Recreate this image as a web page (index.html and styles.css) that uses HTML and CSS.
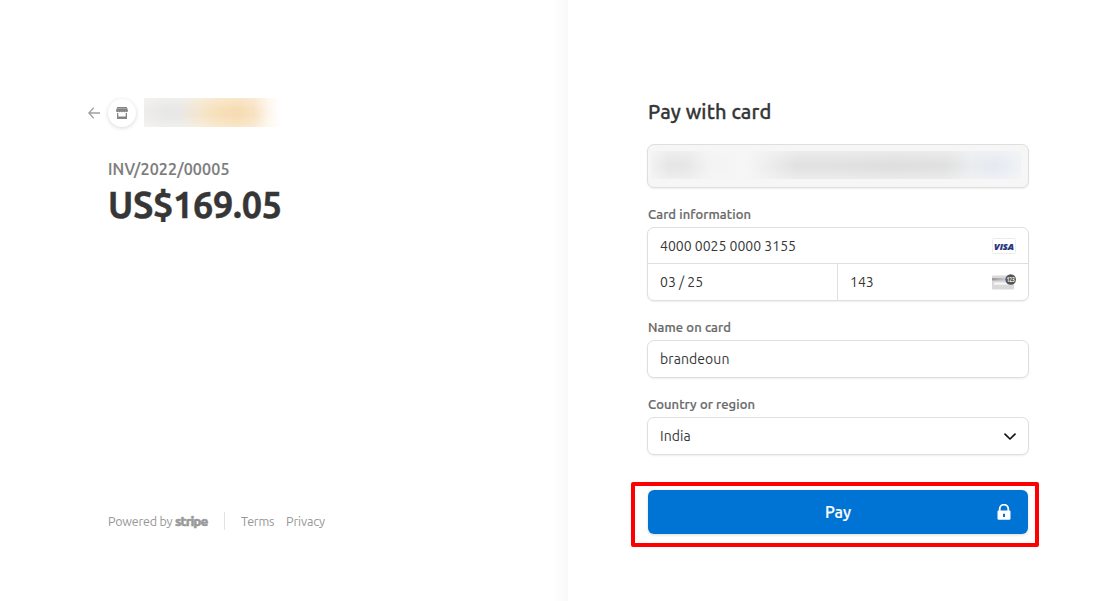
FILE: index.html
```html
<!DOCTYPE html>
<html lang="en">
<head>
<meta charset="utf-8">
<title>Pay with card</title>
<link rel="stylesheet" href="styles.css">
</head>
<body>
<div class="checkout">
  <section class="summary">
    <header class="merchant">
      <svg class="back" width="12" height="12" viewBox="0 0 12 12"><path d="M5.700 .8.9 6l4.800 5.200M1 6h11" fill="none" stroke="#a0a0a0" stroke-width="1.3"/></svg>
      <span class="avatar"><svg width="12" height="12" viewBox="0 0 12 12"><path d="M1 0h10v1H1zM.6 1.300h10.800L12 4a1.300 1.300 0 0 1-2.400.5 1.300 1.300 0 0 1-2.400 0 1.300 1.300 0 0 1-2.400 0 1.300 1.300 0 0 1-2.400 0A1.300 1.300 0 0 1 0 4zM1 6h1.300v3.500h7.400V6H11v6H1z" fill="#858585"/></svg></span>
      <span class="merchant-name"></span>
    </header>
    <div class="invoice">INV/2022/00005</div>
    <div class="amount">US$169.05</div>
    <footer class="footer">
      <span class="powered">Powered by</span><span class="stripe">stripe</span>
      <span class="divider"></span>
      <span class="terms">Terms</span><span class="privacy">Privacy</span>
    </footer>
  </section>
  <main class="payment">
    <h1 class="title">Pay with card</h1>
    <div class="email"><span class="email-mask"></span></div>
    <div class="label label-card">Card information</div>
    <div class="card-box">
      <div class="row number"><span>4000 0025 0000 3155</span>
        <svg width="24" height="16" viewBox="0 0 24 16"><rect x=".5" y=".5" width="23" height="15" rx="1" fill="#fff" stroke="#ececec"/><text class="visa" x="2" y="11.600" textLength="20" lengthAdjust="spacingAndGlyphs">VISA</text></svg>
      </div>
      <div class="split">
        <div class="row expiry"><span>03 / 25</span></div>
        <div class="row cvc"><span>143</span>
          <svg class="cvc-icon" width="24" height="16" viewBox="0 0 24 16"><defs><linearGradient id="stripe" x2="1" y2="0"><stop stop-color="#999"/><stop offset="1" stop-color="#ccc"/></linearGradient></defs><rect y="1.500" width="22" height="14" rx="1" fill="#d9d9d9"/><path d="M0 4h15v2.500H0z" fill="url(#stripe)"/><path d="M2 8.500h17v2.200H2z" fill="#f8f8f8"/><circle cx="18.700" cy="5.500" r="5.300" fill="#555"/><text class="cvc-digits" x="14.700" y="8" textLength="8" lengthAdjust="spacingAndGlyphs">123</text></svg>
        </div>
      </div>
    </div>
    <div class="label label-name">Name on card</div>
    <div class="field"><span>brandeoun</span></div>
    <div class="label label-country">Country or region</div>
    <div class="field"><span>India</span>
      <svg width="12" height="12" viewBox="0 0 12 12"><path d="m1 4.200 5 4.800 5-4.800" fill="none" stroke="#111" stroke-width="1.700" stroke-linecap="round" stroke-linejoin="round"/></svg>
    </div>
    <div class="highlight">
      <button class="pay"><span>Pay</span>
        <svg width="14" height="16" viewBox="0 0 14 16"><path d="M2.700 7V5a4.300 4.300 0 0 1 8.600 0v2" fill="none" stroke="#fff" stroke-width="1.800"/><path fill-rule="evenodd" d="M1.500 6.500h11q1 0 1 1v7q0 1.200-1.200 1.200H1.700Q.5 15.700.5 14.500v-7q0-1 1-1zM6 9.700h2V13H6z" fill="#fff"/></svg>
      </button>
    </div>
  </main>
</div>
</body>
</html>
```

FILE: styles.css
```css
* { box-sizing: border-box; }
body { margin: 0; background: #fff; font-family: Ubuntu, "Noto Sans", sans-serif; color: #363636; }
svg { display: block; flex: none; }
.checkout { display: flex; width: 1107px; height: 601px; overflow: hidden; }
.summary { width: 568px; padding: 98px 0 70px 88px; display: flex; flex-direction: column; background: linear-gradient(to right, #fff 552px, #f9f9f9 568px); }
.merchant { display: flex; align-items: center; height: 30px; }
.avatar { display: grid; place-items: center; width: 28px; height: 28px; margin-left: 8px; border-radius: 50%; background: #fff; box-shadow: 0 1px 4px rgba(0,0,0,.16); }
.merchant-name { width: 136px; height: 29px; margin: 0 0 1px 8px; background: linear-gradient(to bottom, rgba(255,255,255,.3), transparent 40%, transparent 60%, rgba(255,255,255,.3)), linear-gradient(to right, #efedeb 0, #e8e8e8 20px, #e9e8e6 36px, #f5e6ce 56px, #f7dfb9 75px, #f6dcb2 95px, #f8e2c3 110px, #fdf5ea 124px, #fff 136px); }
.invoice { height: 24px; margin: 29px 0 0 20px; font-size: 16px; line-height: 24px; font-weight: 500; letter-spacing: .17px; color: #7a7a7a; white-space: nowrap; -webkit-text-stroke: .2px; }
.amount { height: 48px; margin-left: 20px; font-size: 36px; line-height: 48px; font-weight: 700; letter-spacing: -.3px; white-space: nowrap; -webkit-text-stroke: .4px; }
.footer { display: flex; align-items: center; height: 20px; margin: auto 0 0 20px; font-size: 12.5px; letter-spacing: -.2px; line-height: 20px; color: #969696; }
.powered { width: 67px; white-space: nowrap; }
.stripe { width: 49px; font-size: 13.5px; font-weight: 800; letter-spacing: -.95px; color: #9a9a9a; -webkit-text-stroke: .5px; }
.divider { width: 1px; height: 18px; background: #e3e3e3; margin-right: 16px; }
.terms { width: 45px; }
.privacy { letter-spacing: -.1px; }
.payment { width: 539px; padding: 98px 78px 0 79px; background: #fff; }
.title { height: 28px; margin: 0 0 18px 1px; font-size: 20px; line-height: 28px; font-weight: 500; letter-spacing: .12px; -webkit-text-stroke: .3px; }
.email, .card-box, .field { width: 382px; border: 1px solid #dfdfdf; border-radius: 7px; background: #fff; box-shadow: 0 1px 2px rgba(0,0,0,.07); }
.email { height: 44px; padding: 6px 3px; background: #f6f6f6; }
.email-mask { display: block; width: 370px; height: 28px; background: linear-gradient(to bottom, rgba(246,246,246,.5), transparent 45%, transparent 60%, rgba(246,246,246,.5)), linear-gradient(to right, #f2f2f2 0, #e6e6e6 18px, #e7e7e7 35px, #f3f3f3 58px, #f6f6f6 95px, #eee 115px, #e2e2e2 145px, #e2e2e2 180px, #dfdfdf 240px, #e1e1e1 295px, #eaecee 320px, #e5eaf2 345px, #f0f2f5 370px); }
.label { height: 20px; margin-left: 1px; font-size: 13px; line-height: 20px; font-weight: 500; letter-spacing: .1px; color: #696969; -webkit-text-stroke: .2px; }
.label-card { margin-top: 16px; margin-bottom: 3px; }
.label-name { margin-top: 16px; margin-bottom: 3px; }
.label-country { margin-top: 16px; margin-bottom: 3px; }
.card-box { height: 74px; }
.row { display: flex; align-items: center; justify-content: space-between; height: 36px; padding: 0 12px; font-size: 14px; }
.number { border-bottom: 1px solid #dfdfdf; }
.split { display: flex; }
.expiry { width: 190px; border-right: 1px solid #dfdfdf; }
.cvc { width: 190px; }
.cvc-icon { overflow: visible; }
.visa { font: italic 800 9.5px "Open Sans", sans-serif; fill: #26337a; stroke: #26337a; stroke-width: .2px; }
.cvc-digits { font: 700 6.5px/1 "Open Sans", sans-serif; fill: #eee; }
.field { display: flex; align-items: center; justify-content: space-between; height: 38px; padding: 0 12px; font-size: 14px; letter-spacing: .08px; }
.highlight { width: 408px; height: 65px; margin: 27px 0 0 -16px; padding: 4px 7px 0 13px; border: 4px solid #f00; border-radius: 2px; }
.pay { display: flex; align-items: center; justify-content: space-between; width: 380px; height: 44px; padding: 0 17px 0 177px; border: 0; border-radius: 6px; background: #0074d4; box-shadow: 0 1px 3px rgba(0,0,0,.15); color: #fff; font: 500 16px/24px Ubuntu, "Noto Sans", sans-serif; -webkit-text-stroke: .2px; }
```
